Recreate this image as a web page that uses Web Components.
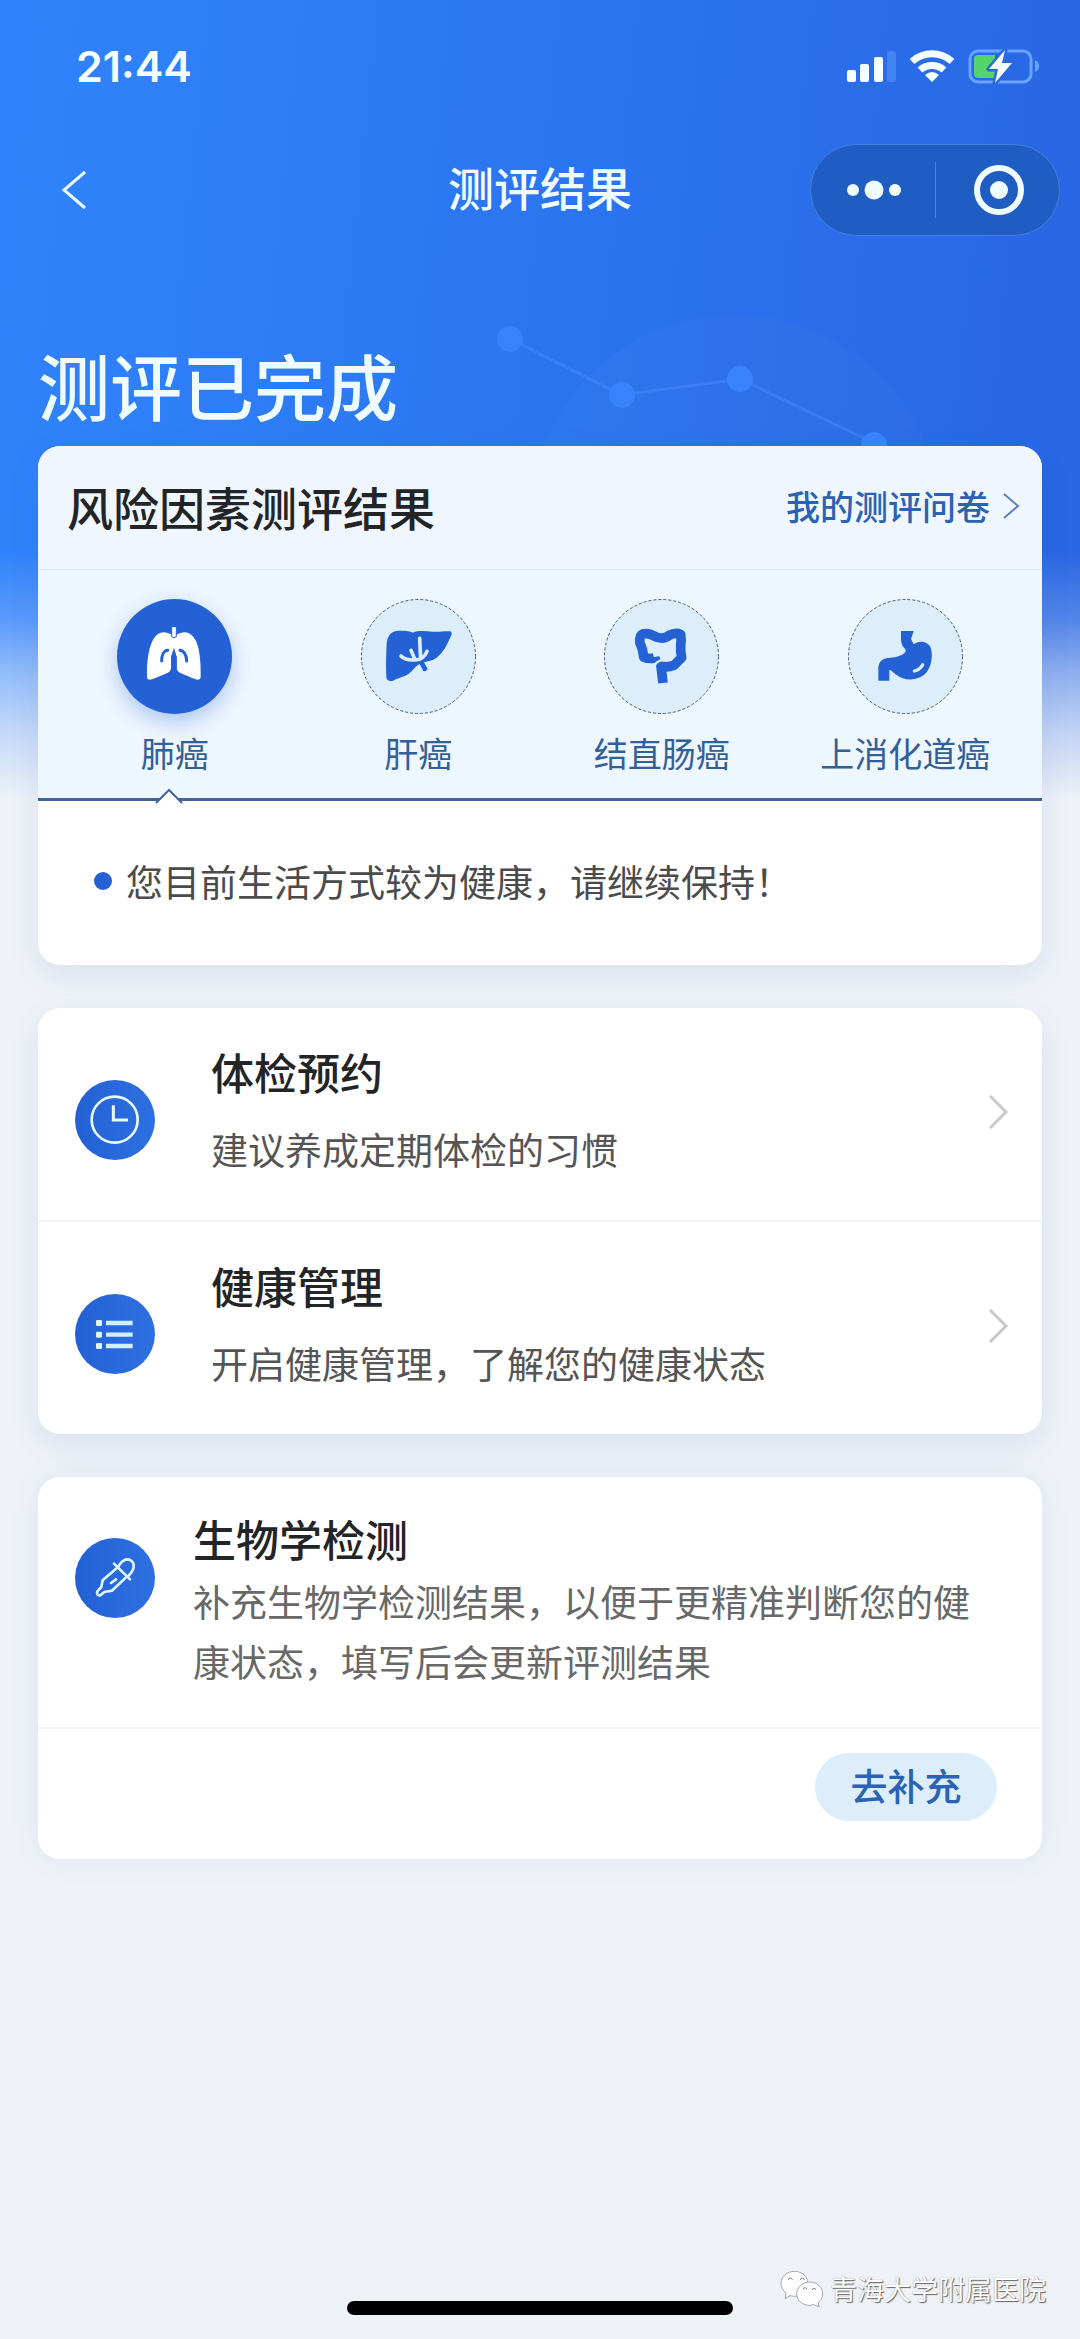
<!DOCTYPE html>
<html lang="zh-CN">
<head>
<meta charset="utf-8">
<meta name="viewport" content="width=device-width, initial-scale=1">
<title>测评结果</title>
<style>
  html { --blue: #2361d4; --link: #2a62b4; --ink: #222426; --soft: #555; --page: #eef2f7; }
  body { margin: 0; background: var(--page); color: var(--ink); font-family: "Noto Sans CJK SC", "Noto Sans", sans-serif; }
</style>
</head>
<body>
<result-page>
  <status-bar slot="top">21:44</status-bar>
  <nav-bar slot="top">测评结果</nav-bar>
  <hero-title slot="top">测评已完成</hero-title>

  <risk-card>
    <span slot="title">风险因素测评结果</span>
    <span slot="link">我的测评问卷</span>
    <risk-tab slot="tabs" icon="lungs" active>肺癌</risk-tab>
    <risk-tab slot="tabs" icon="liver">肝癌</risk-tab>
    <risk-tab slot="tabs" icon="colon">结直肠癌</risk-tab>
    <risk-tab slot="tabs" icon="stomach">上消化道癌</risk-tab>
    <li slot="advice">您目前生活方式较为健康，请继续保持！</li>
  </risk-card>

  <link-list>
    <link-row icon="clock"><span slot="title">体检预约</span>建议养成定期体检的习惯</link-row>
    <link-row icon="list"><span slot="title">健康管理</span>开启健康管理，了解您的健康状态</link-row>
  </link-list>

  <bio-card>
    <span slot="title">生物学检测</span>
    补充生物学检测结果，以便于更精准判断您的健康状态，填写后会更新评测结果
    <span slot="action">去补充</span>
  </bio-card>

  <page-footer slot="bottom">青海大学附属医院</page-footer>
</result-page>

<script>
const ICONS = {
  lungs: `<svg viewBox="81 57 345 345" aria-hidden="true">
    <path fill="#fff" d="M252 168C222 150 205 155 191 176C177 199 170 238 171 290C171 298 178 301 186 298C202 291 219 285 232 279C241 275 243 270 243 262V230H260V262C260 270 262 275 271 279C284 285 301 291 317 298C325 301 332 298 332 290C333 238 328 199 314 176C300 155 283 150 252 168z"/>
    <path fill="#fff" stroke="#2361d4" stroke-width="3" d="M245 140h14v30q-7 6-14 0z"/>
    <path fill="none" stroke="#2361d4" stroke-width="9" stroke-linecap="round" d="M233 211C221 212 215 226 215 243M270 211C282 212 290 226 290 243"/>
    <path fill="#2361d4" d="M252 203L243 230V280H260V230z"/>
  </svg>`,
  liver: `<svg viewBox="810 57 345 345" aria-hidden="true">
    <path fill="#2361d4" d="M912 154C932 151 954 153 966 158C980 151 1003 153 1025 155C1045 156 1064 153 1078 154Q1084 156 1081 165C1070 191 1057 218 1037 233C1023 243 1011 242 999 247L1010 267Q1007 275 997 273L986 252C969 260 962 280 943 287C928 292 917 296 906 302Q888 306 886 291C884 255 886 220 887 190Q890 160 912 154z"/>
    <path fill="none" stroke="#dcedfb" stroke-width="11" stroke-linecap="round" d="M986 175L989 236M930 228Q942 241 970 240Q998 240 1008 214M960 211L971 237"/>
  </svg>`,
  colon: `<svg viewBox="72 57 345 345" aria-hidden="true">
    <path fill="none" stroke="#2361d4" stroke-width="29" stroke-linejoin="round" d="M222 234Q206 238 191 231Q188 205 180 190Q177 166 188 162Q207 158 222 168Q248 182 268 166Q286 156 302 163Q305 180 302 196Q301 216 305 233Q294 244 282 256Q265 263 243 259L249 309"/>
    <path fill="#2361d4" d="M218 232L238 229L241 238L222 248z"/>
    <path fill="none" stroke="#dcedfb" stroke-width="4" d="M226 252L243 241"/>
  </svg>`,
  stomach: `<svg viewBox="804 57 345 345" aria-hidden="true">
    <path fill="#2361d4" d="M963 153H1001L993 177L1001 193C1015 182 1040 182 1051 200C1060 223 1056 258 1037 280C1014 303 972 304 949 284C939 278 934 268 928 270V302H895V260Q898 237 922 234Q945 235 965 225Q981 217 976 208Q963 196 963 177z"/>
    <path fill="none" stroke="#dcedfb" stroke-width="10" stroke-linecap="round" d="M1003 273Q1020 269 1028 254"/>
  </svg>`,
  clock: `<svg viewBox="75 60 240 240" aria-hidden="true" fill="none" stroke="#eaf8ff">
    <circle cx="194" cy="179" r="69" stroke-width="8"/><path stroke-width="9" d="M190 136V180H234"/>
  </svg>`,
  list: `<svg viewBox="75 700 240 240" aria-hidden="true">
    <g fill="#dff5ff"><rect x="138" y="778" width="18" height="18" rx="4"/><rect x="138" y="813" width="18" height="18" rx="4"/><rect x="138" y="847" width="18" height="18" rx="4"/></g>
    <path stroke="#d2efff" stroke-width="13" d="M168 787H248M168 822H248M168 856H248"/>
  </svg>`,
  dropper: `<svg viewBox="75 84 240 240" aria-hidden="true" fill="none" stroke="#dff5ff" stroke-width="8" stroke-linecap="round" stroke-linejoin="round">
    <path d="M192 161L240 208M204 172C213 152 230 143 243 152C257 162 253 181 233 200M198 176L158 211L154 231L142 244Q138 257 151 256L163 246L186 242L226 204M183 219L198 208"/>
  </svg>`
};

const define = (name, html, setup) => customElements.define(name, class extends HTMLElement {
  constructor() {
    super();
    const root = this.attachShadow({ mode: 'open' });
    const t = document.createElement('template');
    t.innerHTML = `<style>:host,*{box-sizing:border-box}:host{display:block}svg{display:block}h1,h2,h3,p,ul{margin:0;padding:0}a{color:inherit;text-decoration:none}button{font:inherit;color:inherit;border:0;margin:0;padding:0;background:none}</style>` + html;
    root.append(t.content.cloneNode(true));
    if (setup) setup(this, root);
  }
});

define('result-page', `
<style>
  :host { position: relative; display: flex; flex-direction: column; min-height: 100vh; }
  .sky { position: absolute; inset: 0 0 auto 0; height: 820px; overflow: hidden;
    background:
      linear-gradient(180deg, #eef4fa00 550px, #eef4fa38 620px, #eef4fa80 670px, #eef3f9c4 730px, #eef2f7 800px),
      linear-gradient(96deg, #3083fc 0%, #2e7cf5 28%, #2a70ec 65%, #2865e2 100%); }
  .sky svg { position: absolute; top: 300px; right: 0; }
  header, main { position: relative; }
  main { display: flex; flex-direction: column; gap: 43px; padding: 0 38px; }
  footer { margin-top: auto; }
</style>
<div class="sky"><svg width="640" height="160" viewBox="440 300 640 160" aria-hidden="true">
  <g fill="#fff" opacity=".012"><circle cx="735" cy="520" r="205"/><circle cx="735" cy="520" r="160"/></g>
  <path d="M510 339L622 395L740 379L874 443" fill="none" stroke="#4689ff" stroke-opacity=".5" stroke-width="3"/>
  <g fill="#3a82fd"><circle cx="510" cy="339" r="13"/><circle cx="622" cy="395" r="13"/><circle cx="740" cy="379" r="13"/><circle cx="874" cy="445" r="13"/></g>
</svg></div>
<header><slot name="top"></slot></header>
<main><slot></slot></main>
<footer><slot name="bottom"></slot></footer>`);

define('status-bar', `
<style>
  :host { display: flex; justify-content: space-between; align-items: center; height: 132px; padding: 0 40px 0 76px; color: #f4feff; }
  time { font: 600 43px/52px Inter, sans-serif; }
  svg { width: 193px; height: 36px; }
</style>
<time><slot></slot></time>
<svg viewBox="847 48 193 36" aria-label="信号 无线网络 充电中" role="img">
  <g fill="#f4feff"><rect x="847" y="70" width="9" height="12" rx="2"/><rect x="860" y="64" width="9" height="18" rx="2"/><rect x="874" y="57" width="9" height="25" rx="2"/></g>
  <rect x="887" y="51" width="9" height="31" rx="2" fill="#4284f2"/>
  <g fill="none" stroke="#f4feff" stroke-width="7"><path d="M912 61.500A30 30 0 0 1 952 61.500"/><path d="M920 70A18 18 0 0 1 944 70"/></g>
  <path fill="#f4feff" d="M925 75Q932 69 939 75L932 82z"/>
  <rect x="970" y="51" width="61" height="31" rx="8" fill="none" stroke="#6ba3fa" stroke-width="3"/>
  <path fill="#6ba3fa" d="M1035 60Q1039 62 1039 66T1035 72z"/>
  <path fill="#55d568" d="M978 55H995V78H978Q974 78 974 74V59Q974 55 978 55z"/>
  <path fill="#f4feff" stroke="#2a68dd" stroke-width="5" paint-order="stroke" stroke-linejoin="round" d="M1005 50L989 69H998L995 83L1012 63H1002z"/>
</svg>`);

define('nav-bar', `
<style>
  :host { display: grid; grid-template-columns: 1fr auto 1fr; align-items: center; height: 116px; color: #f0fdff; }
  .back { justify-self: start; padding: 20px 40px 20px 60px; }
  h1 { font-size: 46px; line-height: 60px; font-weight: 500; padding-bottom: 8px; }
  .capsule { justify-self: end; margin-right: 20px; display: flex; align-items: center; width: 250px; height: 92px; border: 1px solid #4580de; border-radius: 46px; background: #1f5dc3; }
  .capsule button { flex: 1; display: flex; justify-content: center; align-items: center; padding-left: 3px; }
  .capsule i { width: 1px; height: 56px; background: #4c83dc; }
</style>
<a class="back" href="#" aria-label="返回"><svg width="26" height="40" viewBox="0 0 26 40" fill="none" stroke="#e8fbff" stroke-width="3"><path d="M25 2L4 20L25 38"/></svg></a>
<h1><slot></slot></h1>
<div class="capsule">
  <button aria-label="更多"><svg width="56" height="20" viewBox="0 0 56 20" fill="#f0fdff"><circle cx="7" cy="10" r="6"/><circle cx="28" cy="10" r="9.500"/><circle cx="49" cy="10" r="6"/></svg></button>
  <i></i>
  <button aria-label="关闭"><svg width="52" height="52" viewBox="0 0 52 52"><circle cx="26" cy="26" r="22" fill="none" stroke="#f0fdff" stroke-width="6"/><circle cx="26" cy="26" r="9" fill="#f0fdff"/></svg></button>
</div>`);

define('hero-title', `
<style>
  :host { padding: 92px 38px 18px; }
  h2 { color: #effcff; font-size: 72px; line-height: 88px; font-weight: 500; }
</style>
<h2><slot></slot></h2>`);

define('risk-card', `
<style>
  :host { border-radius: 22px; overflow: hidden; background: #fff; box-shadow: 0 10px 30px #4658b01c; }
  .head { display: flex; justify-content: space-between; align-items: center; height: 124px; padding: 0 22px 4px 29px; background: #eff6fe; border-bottom: 1px solid #dfe6ee; }
  h3 { font-size: 46px; line-height: 60px; font-weight: 500; }
  a { display: flex; align-items: center; gap: 13px; color: var(--link); font-size: 34px; line-height: 48px; font-weight: 500; }
  .tabs { display: grid; grid-template-columns: repeat(4, 1fr); height: 231px; padding: 29px 15px 0; background: #eef6fe; border-bottom: 3px solid #41659a; }
  ul { list-style: none; padding: 50px 56px 54px; font-size: 37px; line-height: 60px; color: #4b4b4b; }
  ::slotted(li) { display: flex; align-items: center; gap: 14px; }
  ::slotted(li)::before { content: ""; width: 18px; height: 18px; border-radius: 50%; background: var(--blue); }
</style>
<div class="head"><h3><slot name="title"></slot></h3>
  <a href="#"><slot name="link"></slot><svg width="17" height="26" viewBox="0 0 17 26" fill="none" stroke="#5b82bf" stroke-width="2"><path d="M1 1L15 13L1 25"/></svg></a></div>
<div class="tabs" role="tablist"><slot name="tabs"></slot></div>
<ul><slot name="advice"></slot></ul>`);

define('risk-tab', `
<style>
  :host { display: flex; justify-content: center; position: relative; }
  button { display: flex; flex-direction: column; align-items: center; gap: 15px; color: #335f98; font-size: 34px; line-height: 48px; white-space: nowrap; }
  .disc { width: 115px; height: 115px; border-radius: 50%; background: #dcedfb; }
  .disc svg { width: 115px; height: 115px; }
  .ring { fill: none; stroke: #4d5f73; stroke-width: 1; stroke-dasharray: 3 2; }
  :host([active]) .disc { background: var(--blue); box-shadow: 0 8px 20px #2361d450; }
  :host([active]) .ring, .tip { display: none; }
  :host([active]) .tip { display: block; position: absolute; bottom: -6px; left: calc(50% - 20px); }
</style>
<button role="tab"><span class="disc"></span><span><slot></slot></span></button>
<svg class="tip" width="28" height="16" viewBox="0 0 28 16" aria-hidden="true"><path d="M1 15L14 2L27 15" fill="#fff" stroke="#41659a" stroke-width="2"/></svg>`,
(el, root) => {
  const disc = root.querySelector('.disc');
  disc.innerHTML = ICONS[el.getAttribute('icon')];
  const svg = disc.firstElementChild, b = svg.viewBox.baseVal;
  svg.insertAdjacentHTML('beforeend', `<circle class="ring" vector-effect="non-scaling-stroke" cx="${b.x + b.width / 2}" cy="${b.y + b.height / 2}" r="171"/>`);
  root.querySelector('button').setAttribute('aria-selected', el.hasAttribute('active'));
});

define('link-list', `
<style>
  :host { border-radius: 22px; overflow: hidden; background: #fff; box-shadow: 0 10px 30px #4658b01c; }
  ::slotted(link-row:not(:first-of-type)) { border-top: 2px solid #f4f4f6; }
</style><slot></slot>`);

const BADGE = `.badge { flex: none; width: 80px; height: 80px; border-radius: 50%; background: linear-gradient(90deg, #2361d3, #2d70e2); }`;
define('link-row', `
<style>
  ${BADGE}
  a { display: flex; align-items: center; height: 212px; padding: 0 33px 4px 37px; }
  .badge { margin: 16px 56px 0 0; }
  .text { flex: 1; display: grid; gap: 18px; padding-bottom: 4px; }
  h3 { font-size: 43px; line-height: 60px; font-weight: 500; }
  p { font-size: 37px; line-height: 60px; color: var(--soft); }
</style>
<a href="#"><span class="badge"></span>
  <div class="text"><h3><slot name="title"></slot></h3><p><slot></slot></p></div>
  <svg width="21" height="36" viewBox="0 0 21 36" fill="none" stroke="#c9c9cb" stroke-width="3"><path d="M2 2L18 18L2 34"/></svg></a>`,
(el, root) => { root.querySelector('.badge').innerHTML = ICONS[el.getAttribute('icon')]; });

define('bio-card', `
<style>
  ${BADGE}
  :host { border-radius: 22px; overflow: hidden; background: #fff; box-shadow: 0 0 30px #4658b014; }
  .body { display: flex; padding: 31px 50px 36px 37px; border-bottom: 2px solid #f5f5f7; }
  .badge { margin: 30px 38px 0 0; }
  h3 { font-size: 43px; line-height: 60px; font-weight: 500; padding-bottom: 3px; }
  p { font-size: 37px; line-height: 60px; color: #686868; }
  .foot { display: flex; justify-content: flex-end; padding: 24px 45px 38px; }
  button { width: 182px; height: 68px; padding-bottom: 4px; border-radius: 34px; background: #dcedfb; color: var(--link); font-size: 37px; line-height: 60px; font-weight: 500; }
</style>
<div class="body"><span class="badge">${ICONS.dropper}</span>
  <div><h3><slot name="title"></slot></h3><p><slot></slot></p></div></div>
<div class="foot"><button><slot name="action"></slot></button></div>`);

define('page-footer', `
<style>
  :host { position: relative; height: 80px; padding-top: 42px; }
  .home { width: 386px; height: 14px; margin: 0 auto; border-radius: 7px; background: #000; }
  .mark { position: absolute; right: 34px; top: 10px; display: flex; align-items: center; gap: 6px; font-size: 27px; line-height: 40px; color: #fff; text-shadow: 1px 1px 1px #666, 0 0 1px #888; }
</style>
<div class="home"></div>
<div class="mark"><svg width="44" height="40" viewBox="122 94 132 114" aria-hidden="true">
  <g fill="#fdfdfe" stroke="#a5a9af" stroke-width="3"><path d="M166 98C143 98 125 114 125 134C125 146 131 156 140 163L137 180L152 171C192 180 206 160 206 134C206 114 188 98 166 98z"/>
  <path d="M211 130C189 130 172 146 172 165C172 185 189 200 211 200L223 198L240 205L236 192C246 184 250 175 250 165C250 146 233 130 211 130z"/></g>
  <g fill="none" stroke="#858b92" stroke-width="3"><path d="M147 124a6 6 0 0 1 12 0M183 124a6 6 0 0 1 12 0M192 152a5 5 0 0 1 10 0M219 154a5 5 0 0 1 10 0"/></g>
</svg><span><slot></slot></span></div>`);
</script>
</body>
</html>
